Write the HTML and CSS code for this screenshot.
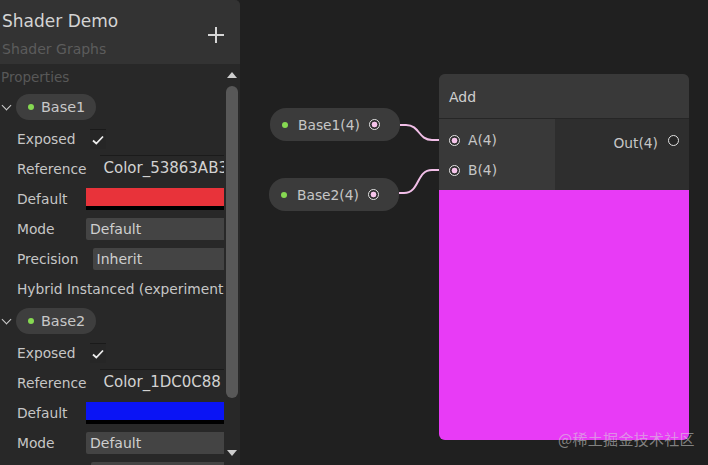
FILE: index.html
```html
<!DOCTYPE html>
<html>
<head>
<meta charset="utf-8">
<link rel="stylesheet" href="styles.css">
</head>
<body>
<div class="app">
  <aside class="board">
    <header class="board-head">
      <div class="titles">
        <div class="title">Shader Demo</div>
        <div class="subtitle">Shader Graphs</div>
      </div>
      <svg class="plus" width="16" height="16" viewBox="0 0 16 16"><path d="M8 0 V16 M0 8 H16" stroke="#d6d6d6" stroke-width="2"/></svg>
    </header>
    <div class="board-body">
      <div class="props">
        <div class="section">Properties</div>

        <div class="prop-head">
          <span class="chev"></span>
          <span class="pill"><span class="dot"></span>Base1</span>
        </div>
        <div class="row"><span class="label">Exposed</span><span class="check"><svg width="12" height="10" viewBox="0 0 12 10"><path d="M1 5.5 L4.3 8.5 L11 1.5" fill="none" stroke="#ececec" stroke-width="1.8"/></svg></span></div>
        <div class="row"><span class="label">Reference</span><span class="text-field">Color_53863AB3</span></div>
        <div class="row"><span class="label">Default</span><span class="swatch red"></span></div>
        <div class="row"><span class="label">Mode</span><span class="dropdown">Default</span></div>
        <div class="row"><span class="label">Precision</span><span class="dropdown">Inherit</span></div>
        <div class="row"><span class="label wide">Hybrid Instanced (experimental)</span></div>

        <div class="prop-head">
          <span class="chev"></span>
          <span class="pill"><span class="dot"></span>Base2</span>
        </div>
        <div class="row"><span class="label">Exposed</span><span class="check"><svg width="12" height="10" viewBox="0 0 12 10"><path d="M1 5.5 L4.3 8.5 L11 1.5" fill="none" stroke="#ececec" stroke-width="1.8"/></svg></span></div>
        <div class="row"><span class="label">Reference</span><span class="text-field">Color_1DC0C88</span></div>
        <div class="row"><span class="label">Default</span><span class="swatch blue"></span></div>
        <div class="row"><span class="label">Mode</span><span class="dropdown">Default</span></div>
        <div class="row"><span class="label blank"></span><span class="dropdown"></span></div>
      </div>
      <div class="scrollbar">
        <span class="arrow up"></span>
        <span class="thumb"></span>
        <span class="arrow down"></span>
      </div>
    </div>
  </aside>

  <main class="canvas">
    <svg class="wires" width="468" height="465" viewBox="0 0 468 465">
      <path d="M160 125 L166 125 C180 125 178 140 192 140 L199 140" fill="none" stroke="#f2bfe8" stroke-width="2"/>
      <path d="M159 193 L164 193 C180 193 176 170 192 170 L199 170" fill="none" stroke="#f2bfe8" stroke-width="2"/>
      <path d="M199 140 L211 140 M199 170 L211 170" fill="none" stroke="#5c5c5c" stroke-width="2"/>
    </svg>

    <div class="prop-node n1">
      <span class="dot"></span><span class="node-text">Base1(4)</span><span class="port filled"></span>
    </div>
    <div class="prop-node n2">
      <span class="dot"></span><span class="node-text">Base2(4)</span><span class="port filled"></span>
    </div>

    <div class="node add">
      <div class="node-title">Add</div>
      <div class="node-ports">
        <div class="inputs">
          <div class="port-row"><span class="port filled"></span><span>A(4)</span></div>
          <div class="port-row"><span class="port filled"></span><span>B(4)</span></div>
        </div>
        <div class="outputs">
          <div class="port-row out"><span class="out-text">Out(4)</span><span class="port"></span></div>
        </div>
      </div>
      <div class="preview"></div>
    </div>
  </main>
</div>
<div class="watermark">@稀土掘金技术社区</div>
</body>
</html>
```

FILE: styles.css
```css
* { box-sizing: border-box; }
html, body {
  margin: 0;
  padding: 0;
  width: 708px;
  height: 465px;
  overflow: hidden;
  background: #202020;
  font-family: "DejaVu Sans", "Noto Sans CJK SC", sans-serif;
  color: #c4c4c4;
}
.app {
  display: flex;
  width: 708px;
  height: 465px;
}

/* ---------- blackboard ---------- */
.board {
  width: 240px;
  flex: none;
  display: flex;
  flex-direction: column;
  background: #282828;
  border-top-right-radius: 5px;
  overflow: hidden;
}
.board-head {
  height: 64px;
  flex: none;
  background: #333333;
  display: flex;
  align-items: flex-start;
  justify-content: space-between;
  padding: 10px 16px 0 2px;
}
.title {
  font-size: 17px;
  line-height: 22px;
  color: #d4d4d4;
}
.subtitle {
  font-size: 14px;
  line-height: 18px;
  margin-top: 8px;
  color: #5c5c5c;
}
.plus {
  margin-top: 17px;
  flex: none;
}
.board-body {
  flex: 1;
  display: flex;
  min-height: 0;
}
.props {
  width: 224px;
  flex: none;
  overflow: hidden;
}
.section {
  height: 26px;
  line-height: 26px;
  font-size: 13.5px;
  color: #585858;
  padding-left: 1px;
}
.prop-head {
  height: 34px;
  display: flex;
  align-items: center;
  padding-left: 1px;
}
.chev {
  width: 7px;
  height: 7px;
  border-right: 1.5px solid #cfcfcf;
  border-bottom: 1.5px solid #cfcfcf;
  transform: rotate(45deg);
  margin: -4px 6px 0 2px;
}
.pill {
  height: 26px;
  width: 80px;
  border-radius: 13px;
  background: #3e3e3e;
  display: flex;
  align-items: center;
  font-size: 14.4px;
  color: #c8c8c8;
  padding-left: 12px;
}
.dot {
  width: 6px;
  height: 6px;
  border-radius: 50%;
  background: #86d952;
  flex: none;
}
.pill .dot { margin-right: 7px; }
.row {
  height: 30px;
  display: flex;
  align-items: center;
  padding-left: 17px;
  white-space: nowrap;
}
.label {
  font-size: 13.8px;
  min-width: 69px;
  padding-right: 14px;
  flex: none;
  color: #c6c6c6;
}
.label.wide { padding-right: 0; }
.check {
  width: 16px;
  height: 20px;
  background: #262626;
  border-top: 1px solid #1a1a1a;
  display: flex;
  align-items: center;
  justify-content: center;
}
.text-field {
  flex: 1;
  height: 26px;
  line-height: 25px;
  border-top: 1px solid #1b1b1b;
  font-size: 15px;
  color: #d2d2d2;
  padding-left: 3px;
  overflow: hidden;
  margin-top: -2px;
}
.swatch {
  flex: 1;
  height: 22px;
  border-bottom: 4px solid #000;
}
.swatch.red { background: #e8333a; }
.swatch.blue { background: #0a14f5; }
.dropdown {
  flex: 1;
  height: 22px;
  line-height: 22px;
  background: #444444;
  border-radius: 2px 0 0 2px;
  font-size: 14px;
  color: #cfcfcf;
  padding-left: 4px;
}
.label.blank { min-width: 74px; }
.scrollbar {
  width: 16px;
  flex: none;
  display: flex;
  flex-direction: column;
  align-items: center;
  padding-top: 8px;
}
.arrow {
  width: 0;
  height: 0;
  border-left: 5px solid transparent;
  border-right: 5px solid transparent;
  flex: none;
}
.arrow.up { border-bottom: 6px solid #cfcfcf; }
.arrow.down { border-top: 6px solid #cfcfcf; margin-top: 52px; }
.thumb {
  width: 12px;
  height: 312px;
  margin-top: 8px;
  border-radius: 6px;
  background: #585858;
  flex: none;
}

/* ---------- canvas ---------- */
.canvas {
  flex: 1;
  position: relative;
  background: #202020;
}
.wires {
  position: absolute;
  left: 0;
  top: 0;
}
.prop-node {
  position: absolute;
  width: 130px;
  height: 33px;
  border-radius: 16px;
  background: #3b3b3b;
  display: flex;
  align-items: center;
  padding-left: 12px;
  font-size: 13.8px;
  color: #c6c6c6;
}
.prop-node.n1 { left: 30px; top: 108px; }
.prop-node.n2 { left: 29px; top: 178px; }
.prop-node .node-text { margin-left: 10px; width: 71px; }
.port {
  width: 11px;
  height: 11px;
  border-radius: 50%;
  border: 1.5px solid #e2e2e2;
  background: #262626;
  flex: none;
}
.port.filled {
  background: radial-gradient(circle, #f5c4ea 0 2.6px, #2b2b2b 3.2px);
}
.node {
  position: absolute;
  display: flex;
  flex-direction: column;
  border-radius: 6px;
  overflow: hidden;
  background: #2e2e2e;
}
.node.add {
  left: 199px;
  top: 74px;
  width: 250px;
  height: 366px;
}
.node-title {
  height: 45px;
  flex: none;
  background: #393939;
  border-bottom: 1px solid #262626;
  font-size: 14px;
  color: #cfcfcf;
  padding-left: 10px;
  line-height: 46px;
}
.node-ports {
  height: 71px;
  flex: none;
  display: flex;
}
.inputs {
  width: 116px;
  background: #393939;
  padding-top: 6px;
}
.outputs {
  flex: 1;
  background: #2e2e2e;
  padding-top: 6px;
}
.port-row {
  height: 30px;
  display: flex;
  align-items: center;
  font-size: 13.8px;
  color: #c6c6c6;
  padding-left: 10px;
  gap: 8px;
}
.port-row.out {
  justify-content: flex-end;
  padding-left: 0;
  padding-right: 10px;
  gap: 10px;
}
.out-text { margin-top: 5px; }
.preview {
  flex: 1;
  background: #e83bf6;
}
.watermark {
  position: absolute;
  left: 558px;
  top: 428px;
  font-family: "Noto Sans CJK SC", sans-serif;
  font-size: 15px;
  color: rgba(215, 215, 215, 0.55);
  letter-spacing: 0.3px;
}
```
